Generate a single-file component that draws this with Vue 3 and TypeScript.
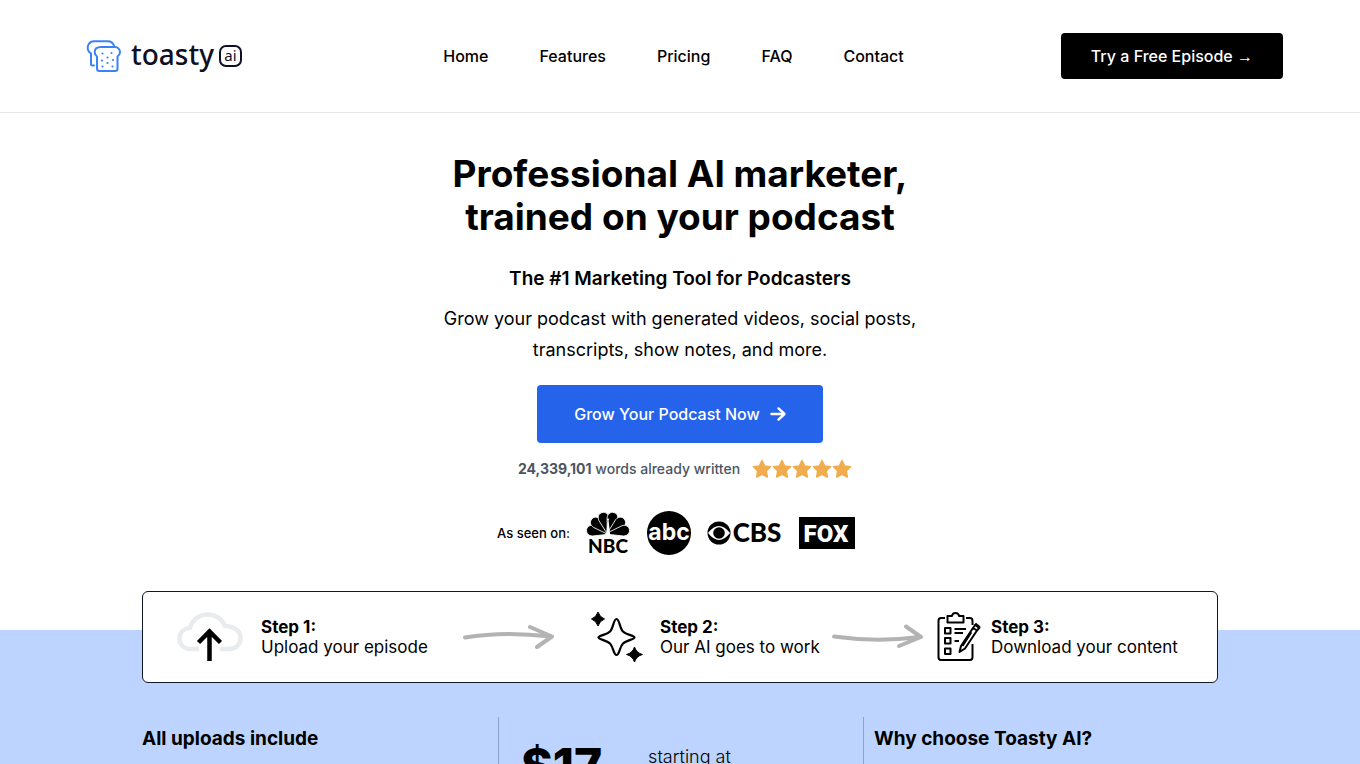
<script setup lang="ts">
const navLinks: string[] = ['Home', 'Features', 'Pricing', 'FAQ', 'Contact']
const stars: number[] = [1, 2, 3, 4, 5]
const petals: number[] = [-80, -48, -16, 16, 48, 80]
</script>

<template>
  <div class="page">
    <header class="header">
      <a class="brand" href="#" aria-label="toasty ai">
        <svg class="toast" viewBox="0 0 34 32" fill="none" stroke="#3b82f6" stroke-width="2" stroke-linejoin="round" stroke-linecap="round" aria-hidden="true">
          <path d="M7 25.500H5.500Q4 25.500 4 24V13.500C0 11.500 0 6.500 1.800 4C3 2 5 1.200 7 1.200H21C24 1.200 26 3 27 5.500" />
          <path d="M14 7H28C31 7 33 9.500 33 12C33 14 32 15.500 30.500 16.500V28.500Q30.500 31 28 31H12.500Q10 31 10 28.500V16.500C8.500 15.500 7.700 14 7.700 12C7.700 9 10 7 14 7Z" fill="#fff" />
          <g fill="#3b82f6" stroke="none">
            <circle cx="15.500" cy="13.500" r="1.100" /><circle cx="24.500" cy="13" r="1.100" />
            <circle cx="20.500" cy="17.500" r="1.100" /><circle cx="15" cy="20.500" r="1.100" />
            <circle cx="26" cy="20" r="1.100" /><circle cx="20.500" cy="23" r="1.100" />
            <circle cx="15.500" cy="26.500" r="1.100" /><circle cx="25.500" cy="26.500" r="1.100" />
          </g>
        </svg>
        <span class="wordmark">toasty</span>
        <span class="chip">ai</span>
      </a>
      <nav class="nav" aria-label="Main">
        <a v-for="link in navLinks" :key="link" href="#">{{ link }}</a>
      </nav>
      <div class="action"><button class="trial" type="button">Try a Free Episode <span class="thin">→</span></button></div>
    </header>

    <main>
      <section class="hero">
        <h1>Professional AI marketer,<br />trained on your podcast</h1>
        <h2>The #1 Marketing Tool for Podcasters</h2>
        <p class="lead">Grow your podcast with generated videos, social posts,<br />transcripts, show notes, and more.</p>
        <button class="grow" type="button">
          Grow Your Podcast Now
          <svg width="16" height="14" viewBox="0 0 16 14" fill="none" stroke="currentColor" stroke-width="2.400" stroke-linecap="round" stroke-linejoin="round" aria-hidden="true">
            <path d="M1.500 7H14M8.500 1.400L14.500 7L8.500 12.600" />
          </svg>
        </button>
        <div class="proof">
          <p><strong>24,339,101</strong> words already written</p>
          <div class="stars" role="img" aria-label="Five stars">
            <svg v-for="star in stars" :key="star" viewBox="0 0 20 20">
              <path d="M10 1.500L12.600 7L18.500 7.800L14.200 12L15.300 18L10 15.200L4.700 18L5.800 12L1.500 7.800L7.400 7Z" fill="#f0ad4e" stroke="#f0ad4e" stroke-width="1.600" stroke-linejoin="round" />
            </svg>
          </div>
        </div>
        <div class="press">
          <span>As seen on:</span>
          <svg class="nbc" viewBox="0 0 44 44" role="img" aria-label="NBC">
            <g transform="translate(22 22.5)">
              <path v-for="angle in petals" :key="angle" :transform="`rotate(${angle})`" d="M0 3L-5.200 -15C-6.500 -24 6.500 -24 5.200 -15Z" stroke="#fff" stroke-width="0.800" />
            </g>
            <path d="M20 27L21.600 9.500L20.800 8L23.200 7.500L22.600 9.500L24.500 27Z" fill="#fff" />
            <text x="22" y="42" text-anchor="middle" class="nbc-text">NBC</text>
          </svg>
          <svg class="abc" viewBox="0 0 44 44" role="img" aria-label="abc">
            <circle cx="22" cy="22" r="22" />
            <text x="22" y="29" text-anchor="middle" class="abc-text">abc</text>
          </svg>
          <svg class="cbs" viewBox="0 0 76 26" role="img" aria-label="CBS">
            <circle cx="12" cy="13" r="11.500" />
            <path d="M1 13Q12 -1 23 13Q12 27 1 13Z" fill="#fff" />
            <circle cx="12" cy="13" r="5.800" />
            <text x="50" y="22" text-anchor="middle" class="cbs-text">CBS</text>
          </svg>
          <svg class="fox" viewBox="0 0 56 32" role="img" aria-label="FOX">
            <path d="M0 0H56V32H0Z" />
            <text x="27" y="25" text-anchor="middle" class="fox-text">FOX</text>
          </svg>
        </div>
      </section>

      <section class="details">
        <div class="steps">
          <div class="step upload">
            <svg width="66" height="50" viewBox="0 0 66 50" fill="none" aria-hidden="true">
              <path d="M22 37H13.500C7 37 2.500 32.500 2.500 26.500C2.500 20.500 7 16.500 13 16C15 8 22 2.500 31 2.500C39 2.500 45.500 7.500 48 14C57 14 63.500 19 63.500 26C63.500 32.500 59 37 52.500 37H43" stroke="#e9ecef" stroke-width="4.500" />
              <path d="M32.500 49V20M21.500 30.500L32.500 19.500L43.500 30.500" stroke="#000" stroke-width="4.500" />
            </svg>
            <p><strong>Step 1:</strong><br />Upload your episode</p>
          </div>
          <svg class="arrow" width="92" height="26" viewBox="0 0 92 26" aria-hidden="true">
            <path d="M2 13.500C25 9.500 58 9 88 12.500M67 3L89 12.500L74 23" />
          </svg>
          <div class="step magic">
            <svg width="52" height="50" viewBox="0 0 52 50" aria-hidden="true">
              <path d="M25.500 7C28.500 7 28.500 16 32 19.500C35.500 23 43.500 23.500 43.500 25.500C43.500 27.500 35.500 28 32 31.500C28.500 35 28.500 43 25.500 43C22.500 43 22.500 35 19 31.500C15.500 28 7.500 27.500 7.500 25.500C7.500 23.500 15.500 23 19 19.500C22.500 16 22.500 7 25.500 7Z" fill="none" stroke="#000" stroke-width="2.200" />
              <path d="M7 0Q8.500 5 13.500 7Q8.500 9 7 14Q5.500 9 0.500 7Q5.500 5 7 0ZM43.500 35Q45.500 41 51.500 42.500Q45.500 44 43.500 50Q41.500 44 35.500 42.500Q41.500 41 43.500 35Z" stroke="#000" />
            </svg>
            <p><strong>Step 2:</strong><br />Our AI goes to work</p>
          </div>
          <svg class="arrow" width="92" height="26" viewBox="0 0 92 26" aria-hidden="true">
            <path d="M2 12.500C30 16.500 60 16.500 88 13M74 2.500L89 13L67 22" />
          </svg>
          <div class="step content">
            <svg width="44" height="50" viewBox="0 0 44 50" fill="none" stroke="#000" stroke-width="2" stroke-linejoin="round" aria-hidden="true">
              <path d="M8 6H4Q1.500 6 1.500 9V45Q1.500 48 4 48H33Q35.500 48 35.500 45V32M29 6H33Q35.500 6 35.500 9V13" />
              <path d="M10.500 10.500V4H15C15.500 0 21.500 0 22 4H26.500V10.500Z" />
              <path d="M8 16H13.500V21.500H8ZM8 26H13.500V31.500H8ZM8 36.500H13.500V42H8ZM17.500 17H29M17.500 21H26M17.500 29H22" />
              <path d="M36 16L24 34L22.500 40L28 36.500L40 18.500ZM34.500 20L25.500 34M36 16L38.500 12.500L42.500 15.500L40 18.500Z" />
              <path d="M38 12L42.500 15.500" stroke-width="3" />
            </svg>
            <p><strong>Step 3:</strong><br />Download your content</p>
          </div>
        </div>

        <div class="columns">
          <div><h3>All uploads include</h3></div>
          <div class="price">
            <strong>$17</strong>
            <span>starting at</span>
          </div>
          <div class="why"><h3>Why choose Toasty AI?</h3></div>
        </div>
      </section>
    </main>
  </div>
</template>

<style>
body {
  margin: 0;
}
</style>

<style scoped>
.page {
  height: 100vh;
  overflow: hidden;
  background: #fff;
  color: #000;
  font-family: Inter, "Liberation Sans", sans-serif;
}
h1, h2, h3, p {
  margin: 0;
}
button {
  border: 0;
  font: inherit;
  cursor: pointer;
}
svg {
  flex: none;
  overflow: visible;
}
.header {
  display: grid;
  grid-template-columns: 1fr auto 1fr;
  align-items: center;
  height: 112px;
  padding: 0 77px 0 64px;
  border-bottom: 1px solid #e5e7eb;
}
.brand {
  display: flex;
  align-items: center;
  padding-left: 23px;
  color: #0f1023;
  text-decoration: none;
}
.toast {
  width: 34px;
  height: 32px;
}
.wordmark {
  margin: 0 5px 4px 10px;
  font: 500 28px/38px "Noto Sans", sans-serif;
}
.chip {
  box-sizing: border-box;
  width: 23px;
  height: 22px;
  border: 2px solid #0f1023;
  border-radius: 7px;
  font: 400 15px/17px "Noto Sans", sans-serif;
  text-align: center;
}
.nav {
  display: flex;
  gap: 51px;
  font-size: 16px;
  font-weight: 500;
}
.nav a {
  color: #000;
  text-decoration: none;
}
.action {
  text-align: right;
}
.trial {
  height: 46px;
  padding: 0 30px;
  border-radius: 4px;
  background: #000;
  color: #fff;
  font-size: 16px;
  font-weight: 500;
}
.thin {
  font-family: "Liberation Sans", sans-serif;
  font-weight: 400;
}
.hero {
  display: flex;
  flex-direction: column;
  align-items: center;
  padding: 39px 0 36px;
  text-align: center;
}
h1 {
  font-size: 37px;
  line-height: 43px;
  font-weight: 700;
}
h2 {
  margin-top: 27px;
  font-size: 19px;
  line-height: 28px;
  font-weight: 600;
}
.lead {
  margin-top: 10px;
  font-size: 18px;
  line-height: 31px;
}
.grow {
  display: flex;
  align-items: center;
  gap: 10px;
  height: 58px;
  margin-top: 20px;
  padding: 0 37px;
  border-radius: 4px;
  background: #2563eb;
  color: #fff;
  font-size: 16px;
  font-weight: 500;
}
.proof {
  display: flex;
  align-items: center;
  gap: 12px;
  margin: 15px 0 0 10px;
  color: #4b5563;
  font-size: 14px;
  line-height: 22px;
  font-weight: 500;
}
.proof strong {
  font-weight: 700;
}
.stars {
  display: flex;
}
.stars svg {
  width: 20px;
  height: 20px;
}
.press {
  display: flex;
  align-items: center;
  margin-top: 31px;
  margin-right: 8px;
  font-size: 13px;
  font-weight: 500;
}
.nbc {
  width: 44px;
  height: 44px;
  margin-left: 16px;
}
.abc {
  width: 44px;
  height: 44px;
  margin-left: 17px;
}
.cbs {
  width: 76px;
  height: 26px;
  margin-left: 16px;
}
.fox {
  width: 56px;
  height: 32px;
  margin-left: 16px;
}
.nbc-text {
  font: 900 19px Lato, sans-serif;
}
.abc-text {
  fill: #fff;
  font: 700 23px Inter, sans-serif;
}
.cbs-text {
  font: 900 26px Lato, sans-serif;
}
.fox-text {
  fill: #fff;
  font: 900 24px Roboto, sans-serif;
}
.details {
  padding: 0 142px;
  background: linear-gradient(#fff 39px, #bcd4ff 39px);
}
.steps {
  display: grid;
  grid-template-columns: 286fr 128fr 241fr 105fr 241fr;
  align-items: center;
  height: 90px;
  padding: 0 39px 0 34px;
  border: 1px solid #111827;
  border-radius: 6px;
  background: #fff;
}
.step {
  display: flex;
  align-items: center;
  font-size: 17px;
  line-height: 20px;
  white-space: nowrap;
}
.upload {
  gap: 18px;
}
.magic {
  gap: 17px;
}
.content {
  gap: 10px;
}
.arrow {
  fill: none;
  stroke: #b3b3b3;
  stroke-width: 4;
  stroke-linecap: round;
  stroke-linejoin: round;
}
.columns {
  display: grid;
  grid-template-columns: 356fr 365fr 355fr;
  min-height: 200px;
  padding-top: 34px;
}
h3 {
  padding-top: 8px;
  font-size: 19px;
  line-height: 28px;
  font-weight: 700;
}
.price,
.why {
  border-left: 1px solid #8fa3c8;
}
.price {
  display: flex;
  align-items: flex-start;
  gap: 46px;
  padding: 20px 0 0 22px;
}
.price strong {
  font-size: 48px;
  line-height: 58px;
  font-weight: 800;
}
.price span {
  padding-top: 6px;
  font-size: 18px;
  line-height: 28px;
  font-weight: 300;
}
.why {
  padding-left: 10px;
}
</style>
